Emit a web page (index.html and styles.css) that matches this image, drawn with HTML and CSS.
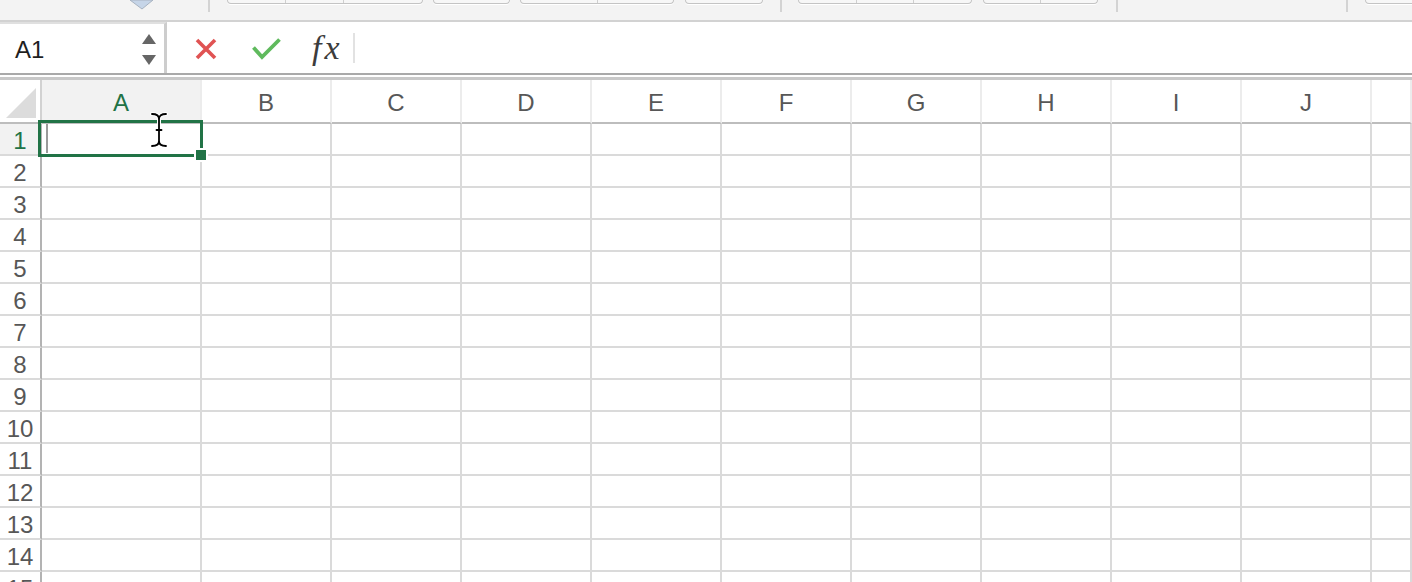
FILE: index.html
```html
<!DOCTYPE html>
<html lang="en">
<head>
    <meta charset="UTF-8">
    <meta name="viewport" content="width=device-width, initial-scale=1.0">
    <title>Sheet1</title>
    <link rel="stylesheet" href="styles.css">
</head>
<body>
    <div class="toolbar">
        <svg class="tb-brush" width="26" height="12" viewBox="0 0 26 12">
            <polygon points="2,0 14,9 25,0" fill="#c6d5e8" stroke="#a7b2c0" stroke-width="1"/>
        </svg>
        <span class="tb-sep sep-1"></span>
        <div class="tb-group grp-font"><span></span><span></span><span class="wide"></span></div>
        <div class="tb-group grp-size"><span></span></div>
        <div class="tb-group grp-style"><span></span><span></span></div>
        <div class="tb-group grp-color"><span></span></div>
        <span class="tb-sep sep-2"></span>
        <div class="tb-group grp-align"><span></span><span></span><span></span></div>
        <div class="tb-group grp-wrap"><span></span><span></span></div>
        <span class="tb-sep sep-3"></span>
        <span class="tb-sep sep-4"></span>
        <div class="tb-group grp-cells"><span></span></div>
    </div>

    <div class="formula-bar">
        <div class="name-box">
            <span class="cell-ref">A1</span>
            <svg class="spinner" width="14" height="31" viewBox="0 0 14 31">
                <polygon points="7,0 14,10 0,10" fill="#666"/>
                <polygon points="0,21 14,21 7,31" fill="#666"/>
            </svg>
        </div>
        <svg class="btn-cancel" width="22" height="22" viewBox="0 0 22 22">
            <path d="M2 2 L20 20 M20 2 L2 20" stroke="#e05353" stroke-width="3.6" fill="none"/>
        </svg>
        <svg class="btn-enter" width="29" height="22" viewBox="0 0 29 22">
            <path d="M1.5 9.5 L10 19 L27.5 1.5" stroke="#5fba5d" stroke-width="3.8" fill="none"/>
        </svg>
        <span class="btn-fx">fx</span>
        <span class="fx-sep"></span>
    </div>
    <div class="bar-gap"></div>

    <div class="sheet">
        <div class="grid" id="grid">
            <div class="corner">
                <svg width="40" height="42" viewBox="0 0 40 42">
                    <polygon points="36,8 36,38 6,38" fill="#dcdcdc"/>
                </svg>
            </div>
            <div class="col-head active">A</div>
            <div class="col-head">B</div>
            <div class="col-head">C</div>
            <div class="col-head">D</div>
            <div class="col-head">E</div>
            <div class="col-head">F</div>
            <div class="col-head">G</div>
            <div class="col-head">H</div>
            <div class="col-head">I</div>
            <div class="col-head">J</div>
            <div class="col-head"></div>
        </div>

        <div class="selection"></div>
        <span class="caret"></span>
        <span class="fill-handle"></span>
        <svg class="ibeam" width="18" height="36" viewBox="0 0 18 36">
            <g fill="none" stroke-linecap="round">
                <path d="M2 2 Q9 2 9 7 Q9 2 16 2 M9 7 V29 M2 34 Q9 34 9 29 Q9 34 16 34 M6.5 18 H11.5" stroke="#fff" stroke-width="4"/>
                <path d="M2 2 Q9 2 9 7 Q9 2 16 2 M9 7 V29 M2 34 Q9 34 9 29 Q9 34 16 34 M6.5 18 H11.5" stroke="#000" stroke-width="1.8"/>
            </g>
        </svg>
    </div>

    <script>
        const grid = document.getElementById('grid');

        for (let r = 1; r <= 15; r++) {
            const head = document.createElement('div');
            head.className = r === 1 ? 'row-head active' : 'row-head';
            head.textContent = r;
            grid.appendChild(head);

            for (let c = 0; c < 11; c++) {
                const cell = document.createElement('div');
                cell.className = 'cell';
                grid.appendChild(cell);
            }
        }
    </script>
</body>
</html>
```

FILE: styles.css
```css
body {
    margin: 0;
    width: 1412px;
    height: 582px;
    overflow: hidden;
    background: #fff;
    font-family: "Liberation Sans", Arial, sans-serif;
}

/* ribbon strip, only its bottom edge is visible */
.toolbar {
    height: 20px;
    background: #f3f3f3;
    border-bottom: 2px solid #d2d2d2;
    display: flex;
    align-items: flex-start;
    overflow: hidden;
}

.tb-brush {
    flex-shrink: 0;
    margin-left: 128px;
}

.tb-sep {
    flex-shrink: 0;
    width: 2px;
    height: 12px;
    background: #d3d3d3;
}

.sep-1 { margin-left: 54px; }
.sep-2 { margin-left: 17px; }
.sep-3 { margin-left: 18px; }
.sep-4 { margin-left: 228px; }

.tb-group {
    flex-shrink: 0;
    display: flex;
    box-sizing: border-box;
    height: 4px;
    border: 1px solid #c4c4c4;
    border-top: 0;
    border-radius: 0 0 5px 5px;
    box-shadow: 0 1px 0 #fff;
    background: #f7f7f7;
}

.tb-group span {
    flex: 1;
}

.tb-group span + span {
    border-left: 1px solid #cfcfcf;
}

.tb-group span.wide {
    flex: 1.38;
}

.grp-font { margin-left: 17px; width: 196px; }
.grp-size { margin-left: 10px; width: 77px; }
.grp-style { margin-left: 10px; width: 154px; }
.grp-color { margin-left: 11px; width: 78px; }
.grp-align { margin-left: 16px; width: 174px; }
.grp-wrap { margin-left: 11px; width: 115px; }
.grp-cells { margin-left: 17px; width: 120px; }

/* formula bar */
.formula-bar {
    height: 51px;
    display: flex;
    align-items: center;
    border-bottom: 2px solid #a9a9a9;
}

.name-box {
    align-self: stretch;
    width: 167px;
    box-sizing: border-box;
    border-top: 2px solid #e0e0e0;
    border-right: 3px solid #cdcdcd;
    display: flex;
    align-items: center;
    justify-content: space-between;
    padding: 2px 8px 0 15px;
}

.cell-ref {
    font-size: 24px;
    color: #1f1f1f;
}

.btn-cancel {
    margin-left: 28px;
    margin-top: 2px;
}

.btn-enter {
    margin-left: 35px;
    margin-top: 3px;
}

.btn-fx {
    margin-left: 31px;
    font-family: "Liberation Serif", "DejaVu Serif", serif;
    font-style: italic;
    font-size: 34px;
    color: #3c3c3c;
    letter-spacing: 3px;
}

.fx-sep {
    margin-left: 10px;
    width: 2px;
    height: 30px;
    background: #e2e2e2;
}

.bar-gap {
    height: 2px;
    background: #fff;
    border-bottom: 3px solid #c8c8c8;
}

/* worksheet */
.sheet {
    position: relative;
    height: 502px;
    overflow: hidden;
}

.grid {
    display: grid;
    grid-template-columns: 42px 160px repeat(9, 130px) 1fr;
    grid-template-rows: 44px;
    grid-auto-rows: 32px;
}

.grid > div {
    box-sizing: border-box;
}

.corner {
    border-right: 2px solid #d2d2d2;
    border-bottom: 2px solid #bdbdbd;
}

.corner svg {
    display: block;
}

.col-head {
    display: flex;
    align-items: center;
    justify-content: center;
    padding-top: 3px;
    font-size: 24px;
    color: #575757;
    border-right: 2px solid #ececec;
    border-bottom: 2px solid #bdbdbd;
}

.row-head {
    display: flex;
    align-items: center;
    justify-content: center;
    padding-top: 3px;
    font-size: 24px;
    color: #575757;
    border-right: 2px solid #b3b3b3;
    border-bottom: 2px solid #dadada;
}

.col-head.active,
.row-head.active {
    background: #f2f2f2;
    color: #217346;
}

.cell {
    border-right: 2px solid #dadada;
    border-bottom: 2px solid #dadada;
}

/* active cell overlay */
.selection {
    position: absolute;
    left: 38px;
    top: 40px;
    width: 165px;
    height: 37px;
    box-sizing: border-box;
    border: 3px solid #217346;
}

.caret {
    position: absolute;
    left: 46px;
    top: 44px;
    width: 2px;
    height: 29px;
    background: #9a9a9a;
}

.fill-handle {
    position: absolute;
    left: 194px;
    top: 68px;
    width: 10px;
    height: 10px;
    background: #217346;
    border: 2px solid #fff;
}

.ibeam {
    position: absolute;
    left: 150px;
    top: 32px;
}
```
